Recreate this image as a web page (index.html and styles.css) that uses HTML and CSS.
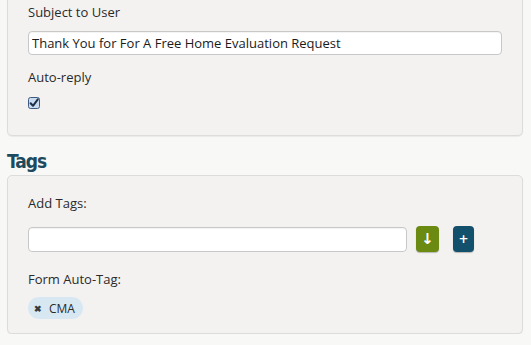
FILE: index.html
```html
<!DOCTYPE html>
<html lang="en">
<head>
    <meta charset="UTF-8">
    <title>Form Settings</title>
    <link rel="stylesheet" href="styles.css">
</head>
<body>
    <div class="panel panel-top">
        <div class="field-label">Subject to User</div>
        <input class="text-input" type="text" value="Thank You for For A Free Home Evaluation Request">
        <div class="field-label spaced">Auto-reply</div>
        <span class="checkbox">
            <svg width="12" height="12" viewBox="0 0 12 12">
                <rect x="0.5" y="0.5" width="11" height="11" rx="2" fill="#c9dcef" stroke="#3d5b80"/>
                <path d="M2.6 6.2 L5 8.8 L9.8 2.4" fill="none" stroke="#1e2f4a" stroke-width="2" stroke-linecap="round" stroke-linejoin="round"/>
            </svg>
        </span>
    </div>

    <h2 class="section-title">Tags</h2>

    <div class="panel panel-tags">
        <div class="field-label">Add Tags:</div>
        <div class="tag-row">
            <input class="text-input tag-input" type="text">
            <button class="btn btn-green">&#8595;</button>
            <button class="btn btn-blue">+</button>
        </div>
        <div class="field-label auto-tag">Form Auto-Tag:</div>
        <span class="tag-pill"><span class="tag-x">&#x2716;</span>CMA</span>
    </div>
</body>
</html>
```

FILE: styles.css
```css
body {
    margin: 0;
    background: #f8f8f7;
    font-family: 'Open Sans', sans-serif;
    font-size: 13px;
    color: #2a2a2a;
}

.panel {
    width: 484px;
    margin-left: 7px;
    padding: 0 10px 0 20px;
    background: #f3f2f1;
    border: 1px solid #dcdcdc;
    border-radius: 5px;
    box-shadow: 0 1px 1px rgba(0, 0, 0, 0.06);
}

.panel-top {
    margin-top: -8px;
    padding-top: 10px;
    padding-bottom: 26px;
    border-top-left-radius: 0;
    border-top-right-radius: 0;
}

.field-label {
    line-height: 18px;
    height: 18px;
}

.field-label.spaced {
    margin-top: 13px;
}

.text-input {
    display: block;
    box-sizing: border-box;
    width: 474px;
    height: 24px;
    margin: 10px 0 0;
    padding: 0 3px;
    border: 1px solid #c8c8c8;
    border-radius: 4px;
    background: #fff;
    font-family: 'Open Sans', sans-serif;
    font-size: 13px;
    color: #1a1a1a;
    box-shadow: inset 0 1px 1px rgba(0, 0, 0, 0.05);
}

.checkbox {
    display: block;
    width: 12px;
    height: 12px;
    margin-top: 11px;
}

.checkbox svg {
    display: block;
}

.section-title {
    margin: 11px 0 0 7px;
    height: 28px;
    line-height: 28px;
    font-family: 'DejaVu Sans Condensed', sans-serif;
    font-weight: bold;
    font-size: 19px;
    letter-spacing: -1px;
    color: #1c4a5e;
}

.panel-tags {
    padding-top: 18px;
    padding-bottom: 14px;
}

.tag-row {
    display: flex;
    align-items: center;
    margin-top: 14px;
}

.tag-input {
    width: 379px;
    height: 25px;
    margin: 0;
}

.btn {
    height: 26px;
    border: none;
    border-radius: 4px;
    color: #fff;
    font-weight: bold;
    font-family: 'DejaVu Sans', sans-serif;
    padding: 0;
    box-shadow: 0 1px 1px rgba(0, 0, 0, 0.25);
}

.btn-green {
    width: 23px;
    margin-left: 9px;
    background: #6a8a12;
    font-size: 15px;
}

.btn-blue {
    width: 21px;
    margin-left: 14px;
    background: #13506c;
    font-size: 12px;
}

.auto-tag {
    margin-top: 18px;
}

.tag-pill {
    display: inline-flex;
    align-items: center;
    height: 22px;
    margin-top: 9px;
    padding: 0 8px 0 6px;
    border-radius: 11px;
    background: #d8e8f2;
    font-size: 12px;
}

.tag-x {
    font-size: 9px;
    font-weight: bold;
    color: #3a3a3a;
    margin-right: 7px;
}
```
